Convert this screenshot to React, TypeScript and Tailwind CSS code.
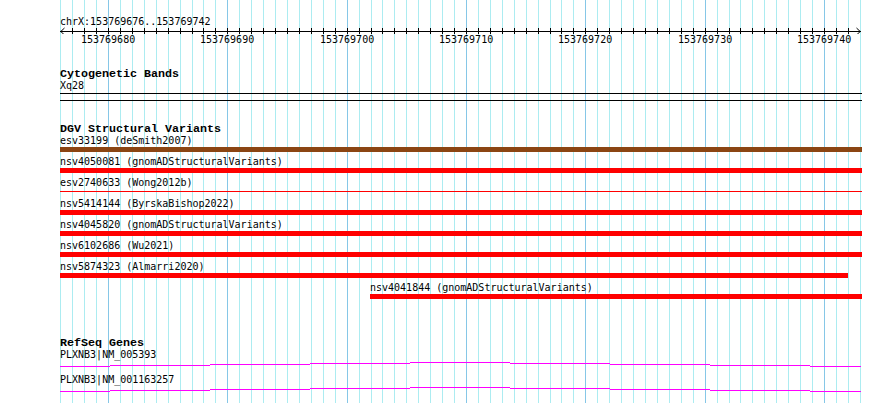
import React from "react";

const X0 = 60.3;
const BP = 11.933;
const gx = (i: number) => Math.round(X0 + i * BP);
const gridIdx = Array.from({ length: 68 }, (_, i) => i);
const majors = [
  { i: 4, label: "153769680" },
  { i: 14, label: "153769690" },
  { i: 24, label: "153769700" },
  { i: 34, label: "153769710" },
  { i: 44, label: "153769720" },
  { i: 54, label: "153769730" },
  { i: 64, label: "153769740" },
];

type Kind = "brown" | "red" | "thin";
const variants: { label: string; start: number; end: number; kind: Kind }[] = [
  { label: "esv33199 (deSmith2007)", start: 0, end: 802, kind: "brown" },
  { label: "nsv4050081 (gnomADStructuralVariants)", start: 0, end: 802, kind: "red" },
  { label: "esv2740633 (Wong2012b)", start: 0, end: 802, kind: "thin" },
  { label: "nsv5414144 (ByrskaBishop2022)", start: 0, end: 802, kind: "red" },
  { label: "nsv4045820 (gnomADStructuralVariants)", start: 0, end: 802, kind: "red" },
  { label: "nsv6102686 (Wu2021)", start: 0, end: 802, kind: "red" },
  { label: "nsv5874323 (Almarri2020)", start: 0, end: 788, kind: "red" },
  { label: "nsv4041844 (gnomADStructuralVariants)", start: 310, end: 802, kind: "red" },
];

const geneSegs: [number, number, number][] = [
  [0, 50, 6],
  [50, 150, 5],
  [150, 250, 4],
  [250, 350, 3],
  [350, 450, 2],
  [450, 550, 3],
  [550, 650, 4],
  [650, 750, 5],
  [750, 801, 6],
];

const genes = ["PLXNB3|NM_005393", "PLXNB3|NM_001163257"];

export default function App() {
  return (
    <div className="relative w-[890px] h-[403px] bg-white overflow-hidden font-['DejaVu_Sans_Mono',monospace] text-[10px] text-black">
      {/* grid lines */}
      <div className="absolute inset-0">
        {gridIdx.map((i) => (
          <div
            key={i}
            className={`absolute top-0 bottom-0 w-px ${(i - 4) % 10 === 0 ? "bg-[#86c7e7]" : "bg-[#acecf1]"}`}
            style={{ left: gx(i) }}
          />
        ))}
      </div>

      <div className="relative ml-[60px] w-[802px] pt-[16px]">
        {/* ruler */}
        <div className="h-[11px] leading-[11px] whitespace-nowrap">chrX:153769676..153769742</div>
        <svg width={802} height={7} className="block">
          <line x1={0} y1={4.5} x2={801} y2={4.5} stroke="#000" strokeWidth={1} />
          <polyline points="4.5,1 0.8,4.5 4.5,8" fill="none" stroke="#000" strokeWidth={1} />
          <polyline points="796.5,1 800.2,4.5 796.5,8" fill="none" stroke="#000" strokeWidth={1} />
          {gridIdx.slice(1, 67).map((i) => (
            <line key={i} x1={gx(i) - 60 + 0.5} y1={1} x2={gx(i) - 60 + 0.5} y2={7} stroke="#000" strokeWidth={1} />
          ))}
        </svg>
        <div className="relative h-[11px] leading-[11px]">
          {majors.map((m) => (
            <span key={m.i} className="absolute top-0 whitespace-nowrap" style={{ left: gx(m.i) - 60 - 27 }}>
              {m.label}
            </span>
          ))}
        </div>

        {/* Cytogenetic bands */}
        <div className="mt-[23px] h-[12px] leading-[12px] font-['Liberation_Mono',monospace] font-bold text-[11.67px] whitespace-nowrap">
          Cytogenetic Bands
        </div>
        <div className="h-[11px] leading-[11px]">Xq28</div>
        <div className="mt-[2px] h-[8px] border-y border-black" />

        {/* DGV */}
        <div className="mt-[22px] h-[12px] leading-[12px] font-['Liberation_Mono',monospace] font-bold text-[11.67px] whitespace-nowrap">
          DGV Structural Variants
        </div>
        {variants.map((v) => (
          <div key={v.label} className="h-[21px]">
            <div className="h-[12px] leading-[12px] whitespace-nowrap" style={{ paddingLeft: v.start }}>
              {v.label}
            </div>
            <div className="h-[5px] flex items-center" style={{ marginLeft: v.start, width: v.end - v.start }}>
              {v.kind === "thin" ? (
                <div className="h-px w-full bg-[#ff0000]" />
              ) : (
                <div className={`h-[5px] w-full ${v.kind === "brown" ? "bg-[#8b4513]" : "bg-[#ff0000]"}`} />
              )}
            </div>
          </div>
        ))}

        {/* RefSeq */}
        <div className="mt-[35px] h-[11px] leading-[11px] font-['Liberation_Mono',monospace] font-bold text-[11.67px] whitespace-nowrap">
          RefSeq Genes
        </div>
        {genes.map((g) => (
          <div key={g}>
            <div className="h-[11px] leading-[11px] whitespace-nowrap">{g}</div>
            <svg width={802} height={14} className="block">
              {geneSegs.map(([a, b, y]) => (
                <rect key={a} x={a} y={y} width={b - a} height={1} fill="#ff00ff" />
              ))}
            </svg>
          </div>
        ))}
      </div>
    </div>
  );
}
